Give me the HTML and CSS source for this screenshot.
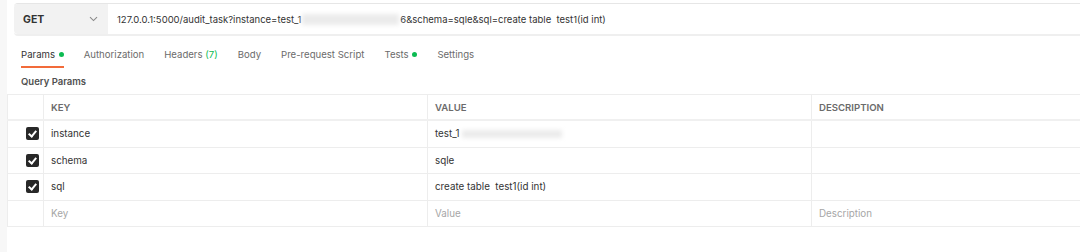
FILE: index.html
```html
<!DOCTYPE html>
<html lang="en">
<head>
    <meta charset="UTF-8">
    <meta name="viewport" content="width=device-width, initial-scale=1.0">
    <title>Request</title>
    <link rel="stylesheet" href="styles.css">
</head>
<body>
<div class="app">
    <div class="gutter"></div>
    <div class="main">
        <div class="url-bar">
            <div class="method">
                <span>GET</span>
                <svg class="chevron" width="9" height="6" viewBox="0 0 9 6"><path d="M1 1.2 L4.5 4.6 L8 1.2" fill="none" stroke="#8a8a8a" stroke-width="1.1"/></svg>
            </div>
            <div class="url">127.0.0.1:5000/audit_task?instance=test_1<span class="redact url-redact"></span>6&amp;schema=sqle&amp;sql=create table  test1(id int)</div>
        </div>

        <div class="tabs">
            <div class="tab active">Params <span class="dot"></span></div>
            <div class="tab">Authorization</div>
            <div class="tab">Headers <span class="count">(7)</span></div>
            <div class="tab">Body</div>
            <div class="tab">Pre-request Script</div>
            <div class="tab">Tests <span class="dot"></span></div>
            <div class="tab">Settings</div>
        </div>

        <div class="section-title">Query Params</div>

        <div class="params">
            <div class="row head">
                <div class="cell check"></div>
                <div class="cell key">KEY</div>
                <div class="cell value">VALUE</div>
                <div class="cell desc">DESCRIPTION</div>
            </div>
            <div class="row">
                <div class="cell check"><span class="box"></span></div>
                <div class="cell key">instance</div>
                <div class="cell value">test_1<span class="redact value-redact"></span></div>
                <div class="cell desc"></div>
            </div>
            <div class="row">
                <div class="cell check"><span class="box"></span></div>
                <div class="cell key">schema</div>
                <div class="cell value">sqle</div>
                <div class="cell desc"></div>
            </div>
            <div class="row">
                <div class="cell check"><span class="box"></span></div>
                <div class="cell key">sql</div>
                <div class="cell value">create table  test1(id int)</div>
                <div class="cell desc"></div>
            </div>
            <div class="row empty">
                <div class="cell check"></div>
                <div class="cell key">Key</div>
                <div class="cell value">Value</div>
                <div class="cell desc">Description</div>
            </div>
        </div>
    </div>
</div>
</body>
</html>
```

FILE: styles.css
```css
body {
    margin: 0;
    background-color: #fff;
    font-family: Inter, "Open Sans", sans-serif;
    font-size: 9.8px;
    color: #333;
}

.app {
    display: flex;
    height: 252px;
    overflow: hidden;
}

.gutter {
    width: 7px;
    background-color: #f7f7f7;
    flex: none;
}

.main {
    flex: 1;
    min-width: 0;
}

/* request line */
.url-bar {
    display: flex;
    height: 30px;
    margin: 3px 0 0 7px;
    border-top: 1px solid #e6e6e6;
    border-bottom: 2px solid #efefef;
    border-radius: 4px 0 0 4px;
}

.method {
    width: 94px;
    display: flex;
    align-items: center;
    justify-content: space-between;
    padding: 0 10px 0 9px;
    box-sizing: border-box;
    background-color: #f2f2f2;
    border-radius: 4px 0 0 4px;
    font-weight: 700;
    font-size: 10.5px;
    color: #333;
}

.url {
    display: flex;
    align-items: center;
    padding-left: 9px;
    white-space: pre;
    font-size: 9.5px;
    color: #333;
}

.redact {
    display: inline-block;
    height: 11px;
    background-color: #ebebeb;
    filter: blur(2px);
}

.url-redact {
    width: 97px;
    margin: 0 1px;
}

.value-redact {
    width: 100px;
    height: 8px;
    margin-left: 2px;
}

/* tabs */
.tabs {
    display: flex;
    height: 32px;
    padding-left: 14px;
    gap: 20px;
    font-size: 9.6px;
}

.tab {
    display: flex;
    align-items: center;
    padding-top: 6px;
    box-sizing: border-box;
    border-bottom: 2px solid transparent;
    color: #6b6b6b;
    white-space: pre;
}

.tab.active {
    color: #333;
    border-bottom-color: #f26b3a;
}

.tab .count {
    color: #0cbb52;
}

.dot {
    display: inline-block;
    width: 5px;
    height: 5px;
    border-radius: 50%;
    background-color: #0cbb52;
    margin-left: 1px;
}

.section-title {
    height: 26px;
    line-height: 27px;
    padding-left: 14px;
    font-weight: 600;
    font-size: 9.5px;
    color: #505050;
}

/* params table */
.params {
    border-top: 1px solid #ededed;
}

.row {
    display: flex;
    height: 26.5px;
    border-bottom: 1px solid #ededed;
    box-sizing: border-box;
}

.row.head {
    height: 26px;
    border-bottom: 2px solid #f0f0f0;
    font-weight: 600;
    font-size: 9.6px;
    color: #6b6b6b;
}

.cell {
    display: flex;
    align-items: center;
    padding-left: 7px;
    border-left: 1px solid #ededed;
    white-space: pre;
    box-sizing: border-box;
}

.cell.check {
    width: 36px;
    padding-left: 0;
    justify-content: flex-end;
    padding-right: 4px;
}

.cell.key,
.cell.value {
    width: 384px;
}

.cell.desc {
    flex: 1;
}

.row.empty .cell {
    color: #a6a6a6;
}

.box {
    width: 13px;
    height: 13px;
    border-radius: 2px;
    background-color: #282828;
    position: relative;
}

.box::after {
    content: "";
    position: absolute;
    left: 4px;
    top: 2px;
    width: 3px;
    height: 6px;
    border: solid #fff;
    border-width: 0 2px 2px 0;
    transform: rotate(40deg);
}
```
